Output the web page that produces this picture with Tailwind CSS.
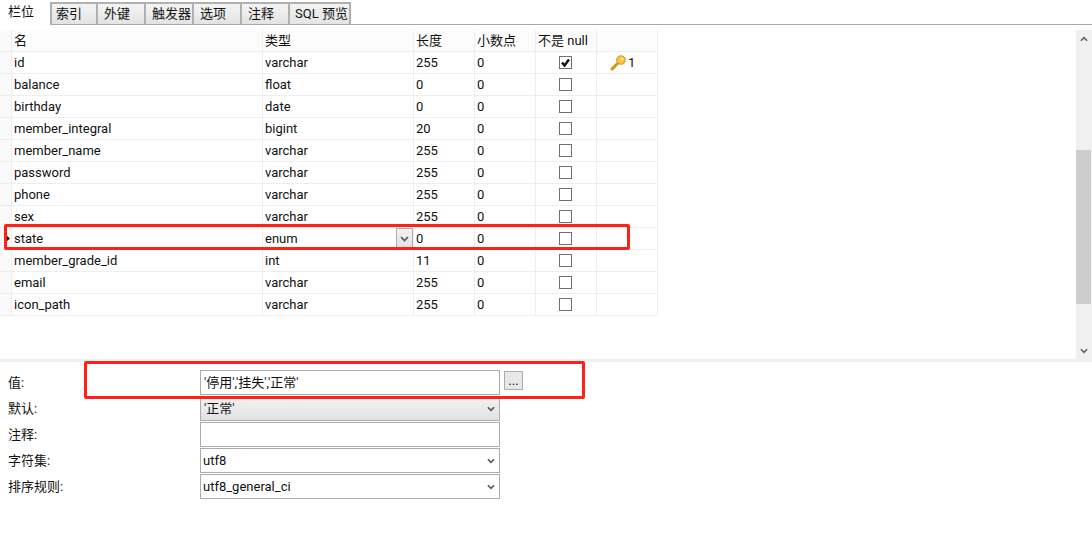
<!DOCTYPE html>
<html lang="zh">
<head>
<meta charset="utf-8">
<script src="https://cdn.jsdelivr.net/npm/@tailwindcss/browser@4"></script>
</head>
<body class="bg-white">
<div class="relative w-[1092px] h-[535px] overflow-hidden bg-white text-[13px] leading-[20px] text-[#111111] font-['Roboto','Noto_Sans_CJK_SC',sans-serif]">

  <!-- Tabs -->
  <div class="flex h-[25px] items-end border-b border-[#aaaaaa]">
    <div class="w-[52px] h-[23px] -mb-px pl-[8px] bg-white border-r-2 border-[#b0b0b0]">栏位</div>
    <div class="w-[46px] h-[22px] pl-[4px] border-2 border-l-0 border-b-0 border-[#b0b0b0] bg-gradient-to-b from-[#f4f4f4] to-[#e3e3e3]">索引</div>
    <div class="w-[48px] h-[22px] pl-[6px] border-2 border-l-0 border-b-0 border-[#b0b0b0] bg-gradient-to-b from-[#f4f4f4] to-[#e3e3e3]">外键</div>
    <div class="w-[48px] h-[22px] pl-[6px] border-2 border-l-0 border-b-0 border-[#b0b0b0] bg-gradient-to-b from-[#f4f4f4] to-[#e3e3e3]">触发器</div>
    <div class="w-[48px] h-[22px] pl-[6px] border-2 border-l-0 border-b-0 border-[#b0b0b0] bg-gradient-to-b from-[#f4f4f4] to-[#e3e3e3]">选项</div>
    <div class="w-[48px] h-[22px] pl-[6px] border-2 border-l-0 border-b-0 border-[#b0b0b0] bg-gradient-to-b from-[#f4f4f4] to-[#e3e3e3]">注释</div>
    <div class="w-[61px] h-[22px] pl-[5px] border-2 border-l-0 border-b-0 border-[#b0b0b0] bg-gradient-to-b from-[#f4f4f4] to-[#e3e3e3]">SQL 预览</div>
  </div>

  <!-- Grid + scrollbar -->
  <div class="flex h-[334px] pt-[5px]">
    <div class="w-[1076px]">
      <div class="grid grid-cols-[12px_251px_151px_61px_61px_61px_61px] w-[658px] auto-rows-[22px] leading-[22px] [&>div]:border-b [&>div]:border-r [&>div]:border-[#eeeeee] [&>div]:pl-[2px]">
        <div class="bg-[#fafafa]"></div><div class="bg-[#fcfcfc]">名</div><div class="bg-[#fcfcfc]">类型</div><div class="bg-[#fcfcfc]">长度</div><div class="bg-[#fcfcfc]">小数点</div><div class="bg-[#fcfcfc]">不是 null</div><div class="bg-[#fcfcfc]"></div>

        <div class="bg-[#fafafa]"></div><div>id</div><div>varchar</div><div>255</div><div>0</div>
        <div class="flex items-center !pl-[23px]"><span class="flex items-center justify-center size-[13px] border border-[#707070]"><svg viewBox="0 0 11 11" class="size-[11px]"><path d="M2 5.5 L4.5 8.5 L9 2.5" fill="none" stroke="#111" stroke-width="2.4"/></svg></span></div>
        <div class="flex items-center gap-[2px] !pl-[13px]"><svg viewBox="0 0 16 16" class="size-[16px]"><path d="M2 14 L8 8" stroke="#d2961c" stroke-width="3" stroke-linecap="round"/><path d="M3 11.5 L5 13.5" stroke="#d2961c" stroke-width="1.5"/><circle cx="11" cy="5" r="4.3" fill="#f6c545" stroke="#d2961c" stroke-width="1"/><circle cx="12" cy="4" r="1.1" fill="#fff3c4"/></svg><span>1</span></div>

        <div class="bg-[#fafafa]"></div><div>balance</div><div>float</div><div>0</div><div>0</div><div class="flex items-center !pl-[23px]"><span class="size-[13px] border border-[#707070]"></span></div><div></div>
        <div class="bg-[#fafafa]"></div><div>birthday</div><div>date</div><div>0</div><div>0</div><div class="flex items-center !pl-[23px]"><span class="size-[13px] border border-[#707070]"></span></div><div></div>
        <div class="bg-[#fafafa]"></div><div>member_integral</div><div>bigint</div><div>20</div><div>0</div><div class="flex items-center !pl-[23px]"><span class="size-[13px] border border-[#707070]"></span></div><div></div>
        <div class="bg-[#fafafa]"></div><div>member_name</div><div>varchar</div><div>255</div><div>0</div><div class="flex items-center !pl-[23px]"><span class="size-[13px] border border-[#707070]"></span></div><div></div>
        <div class="bg-[#fafafa]"></div><div>password</div><div>varchar</div><div>255</div><div>0</div><div class="flex items-center !pl-[23px]"><span class="size-[13px] border border-[#707070]"></span></div><div></div>
        <div class="bg-[#fafafa]"></div><div>phone</div><div>varchar</div><div>255</div><div>0</div><div class="flex items-center !pl-[23px]"><span class="size-[13px] border border-[#707070]"></span></div><div></div>
        <div class="bg-[#fafafa]"></div><div>sex</div><div>varchar</div><div>255</div><div>0</div><div class="flex items-center !pl-[23px]"><span class="size-[13px] border border-[#707070]"></span></div><div></div>

        <div class="bg-[#fafafa] flex items-center !pl-[6px]"><svg viewBox="0 0 4 7" class="w-[4px] h-[7px]"><path d="M0 0 L4 3.5 L0 7 Z" fill="#111"/></svg></div>
        <div>state</div>
        <div class="relative">enum<span class="absolute right-0 top-0 flex items-center justify-center w-[17px] h-[21px] border border-[#acacac] bg-gradient-to-b from-[#f2f2f2] to-[#e2e2e2]"><svg viewBox="0 0 9 6" class="w-[9px] h-[6px]"><path d="M1 1 L4.5 4.5 L8 1" fill="none" stroke="#555" stroke-width="1.6"/></svg></span></div>
        <div>0</div><div>0</div><div class="flex items-center !pl-[23px]"><span class="size-[13px] border border-[#707070]"></span></div><div></div>

        <div class="bg-[#fafafa]"></div><div>member_grade_id</div><div>int</div><div>11</div><div>0</div><div class="flex items-center !pl-[23px]"><span class="size-[13px] border border-[#707070]"></span></div><div></div>
        <div class="bg-[#fafafa]"></div><div>email</div><div>varchar</div><div>255</div><div>0</div><div class="flex items-center !pl-[23px]"><span class="size-[13px] border border-[#707070]"></span></div><div></div>
        <div class="bg-[#fafafa]"></div><div>icon_path</div><div>varchar</div><div>255</div><div>0</div><div class="flex items-center !pl-[23px]"><span class="size-[13px] border border-[#707070]"></span></div><div></div>
      </div>
    </div>
    <div class="w-[16px] h-[329px] bg-[#f0f0f0] flex flex-col">
      <div class="h-[17px] flex items-center justify-center"><svg viewBox="0 0 9 6" class="w-[8px] h-[6px]"><path d="M1 5 L4.5 1.5 L8 5" fill="none" stroke="#606060" stroke-width="1.8"/></svg></div>
      <div class="mt-[103px] h-[154px] w-[15px] bg-[#cdcdcd]"></div>
      <div class="mt-auto h-[17px] flex items-center justify-center"><svg viewBox="0 0 9 6" class="w-[8px] h-[6px]"><path d="M1 1 L4.5 4.5 L8 1" fill="none" stroke="#606060" stroke-width="1.8"/></svg></div>
    </div>
  </div>

  <!-- Splitter -->
  <div class="h-[3px] bg-[#f0f0f0]"></div>

  <!-- Properties form -->
  <div class="pt-[8px] pl-[8px] flex flex-col">
    <div class="flex h-[26px]">
      <div class="w-[192px] pt-[3px]">值:</div>
      <div class="w-[300px] h-[25px] border border-[#ababab] pl-[3px] pt-[2px]">'停用','挂失','正常'</div>
      <div class="ml-[4px] mt-[1px] w-[19px] h-[19px] border border-[#acacac] bg-[#e8e8e8] text-center leading-[18px]">...</div>
    </div>
    <div class="flex h-[26px]">
      <div class="w-[192px] pt-[3px]">默认:</div>
      <div class="w-[300px] h-[25px] border border-[#ababab] pl-[3px] pt-[2px] flex justify-between bg-gradient-to-b from-[#f2f2f2] to-[#e2e2e2]"><span>'正常'</span><svg viewBox="0 0 9 6" class="w-[8px] h-[6px] mr-[4px] mt-[7px]"><path d="M1 1 L4.5 4.5 L8 1" fill="none" stroke="#555" stroke-width="1.8"/></svg></div>
    </div>
    <div class="flex h-[26px]">
      <div class="w-[192px] pt-[3px]">注释:</div>
      <div class="w-[300px] h-[25px] border border-[#ababab]"></div>
    </div>
    <div class="flex h-[26px]">
      <div class="w-[192px] pt-[3px]">字符集:</div>
      <div class="w-[300px] h-[25px] border border-[#ababab] pl-[2px] pt-[2px] flex justify-between"><span>utf8</span><svg viewBox="0 0 9 6" class="w-[8px] h-[6px] mr-[4px] mt-[7px]"><path d="M1 1 L4.5 4.5 L8 1" fill="none" stroke="#555" stroke-width="1.8"/></svg></div>
    </div>
    <div class="flex h-[26px]">
      <div class="w-[192px] pt-[3px]">排序规则:</div>
      <div class="w-[300px] h-[25px] border border-[#ababab] pl-[2px] pt-[2px] flex justify-between"><span>utf8_general_ci</span><svg viewBox="0 0 9 6" class="w-[8px] h-[6px] mr-[4px] mt-[7px]"><path d="M1 1 L4.5 4.5 L8 1" fill="none" stroke="#555" stroke-width="1.8"/></svg></div>
    </div>
  </div>

  <!-- Red annotations -->
  <div class="absolute left-[4px] top-[224px] w-[626px] h-[26px] border-[3px] border-[#ff2016] rounded-[2px]"></div>
  <div class="absolute left-[84px] top-[361px] w-[501px] h-[38px] border-[3px] border-[#ff2016] rounded-[2px]"></div>
</div>
</body>
</html>
